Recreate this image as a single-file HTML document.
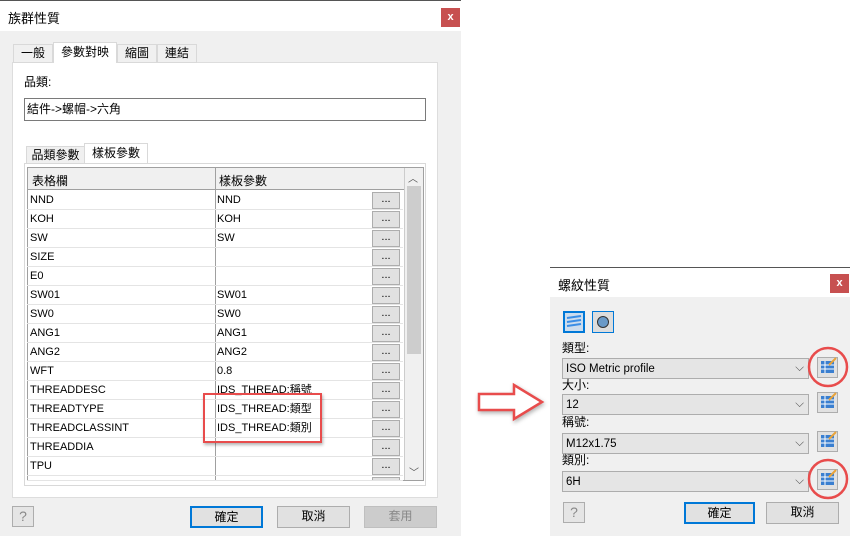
<!DOCTYPE html><html><head><meta charset="utf-8"><style>
*{box-sizing:border-box;margin:0;padding:0}
body{width:850px;height:536px;background:#fff;position:relative;overflow:hidden;font-family:"Liberation Sans","Noto Sans CJK TC",sans-serif;font-size:12px;color:#000}
.a{position:absolute}
.btn{position:absolute;background:#e1e1e1;border:1px solid #adadad;text-align:center;font-size:12px;line-height:19px}
.row{position:absolute;left:27px;width:376px;height:19px;border-bottom:1px solid #e4e4e4;font-size:11px;line-height:19px}
.row span{position:absolute;left:3px}
.row i{font-style:normal;position:absolute;left:190px}
.row b{position:absolute;left:345px;top:1px;width:28px;height:17px;background:#e1e1e1;border:1px solid #adadad;font-weight:normal;line-height:12px;text-align:center}
.combo{position:absolute;left:562px;width:247px;height:21px;background:#e5e5e5;border:1px solid #adadad;font-size:11.5px;line-height:20px;padding-left:3px}
.combo:after{content:"⌵";position:absolute;right:4px;top:-1px;color:#555}
.ib{position:absolute;left:817px;width:21px;height:21px;background:#e1e1e1;border:1px solid #adadad}
</style></head><body>
<div class="a" style="left:0;top:0;width:461px;height:536px;background:#f0f0f0"></div>
<div class="a" style="left:0;top:0;width:461px;height:1px;background:#555"></div>
<div class="a" style="left:0;top:1px;width:461px;height:30px;background:#fff"></div>
<div class="a" style="left:8px;top:8px;font-size:13px">族群性質</div>
<div class="a" style="left:441px;top:8px;width:19px;height:19px;background:#c75050;color:#fff;text-align:center;line-height:18px;font-size:11px;font-weight:bold">x</div>
<div class="a" style="left:12px;top:62px;width:426px;height:436px;background:#fff;border:1px solid #ddd"></div>
<div class="a" style="left:13px;top:44px;width:40px;height:19px;border:1px solid #d9d9d9;background:#f0f0f0;text-align:center;line-height:17px">一般</div>
<div class="a" style="left:53px;top:42px;width:64px;height:21px;border:1px solid #d9d9d9;border-bottom:none;background:#fff;text-align:center;line-height:18px">參數對映</div>
<div class="a" style="left:117px;top:44px;width:40px;height:19px;border:1px solid #d9d9d9;background:#f0f0f0;text-align:center;line-height:17px">縮圖</div>
<div class="a" style="left:157px;top:44px;width:40px;height:19px;border:1px solid #d9d9d9;background:#f0f0f0;text-align:center;line-height:17px">連結</div>
<div class="a" style="left:24px;top:73px">品類:</div>
<div class="a" style="left:24px;top:98px;width:402px;height:23px;border:1px solid #7a7a7a;line-height:20px;padding-left:2px">結件->螺帽->六角</div>
<div class="a" style="left:26px;top:146px;width:59px;height:18px;border:1px solid #d9d9d9;background:#f0f0f0;text-align:center;line-height:16px">品類參數</div>
<div class="a" style="left:84px;top:143px;width:64px;height:21px;border:1px solid #d9d9d9;border-bottom:none;background:#fff;text-align:center;line-height:18px">樣板參數</div>
<div class="a" style="left:24px;top:163px;width:402px;height:323px;border:1px solid #d9d9d9;background:#fff"></div>
<div class="a" style="left:27px;top:167px;width:397px;height:314px;border:1px solid #a0a0a0;background:#fff;overflow:hidden">
<div class="a" style="left:0;top:0;width:376px;height:22px;background:#f0f0f0;border-bottom:1px solid #a0a0a0"></div>
<div class="a" style="left:187px;top:0;width:1px;height:314px;background:#a0a0a0"></div>
<div class="a" style="left:4px;top:4px">表格欄</div><div class="a" style="left:191px;top:4px">樣板參數</div>
<div class="a" style="left:376px;top:0;width:19px;height:314px;background:#f0f0f0;border-left:1px solid #ccc"></div>
<div class="a" style="left:380px;top:2px;font-size:10px;color:#555">︿</div>
<div class="a" style="left:379px;top:18px;width:14px;height:168px;background:#cdcdcd"></div>
<div class="a" style="left:381px;top:296px;font-size:10px;color:#555">﹀</div>
</div>
<div class="a" style="left:0;top:1px">
<div class="row" style="top:190px"><span>NND</span><i>NND</i><b>...</b></div>
<div class="row" style="top:209px"><span>KOH</span><i>KOH</i><b>...</b></div>
<div class="row" style="top:228px"><span>SW</span><i>SW</i><b>...</b></div>
<div class="row" style="top:247px"><span>SIZE</span><b>...</b></div>
<div class="row" style="top:266px"><span>E0</span><b>...</b></div>
<div class="row" style="top:285px"><span>SW01</span><i>SW01</i><b>...</b></div>
<div class="row" style="top:304px"><span>SW0</span><i>SW0</i><b>...</b></div>
<div class="row" style="top:323px"><span>ANG1</span><i>ANG1</i><b>...</b></div>
<div class="row" style="top:342px"><span>ANG2</span><i>ANG2</i><b>...</b></div>
<div class="row" style="top:361px"><span>WFT</span><i>0.8</i><b>...</b></div>
<div class="row" style="top:380px"><span>THREADDESC</span><i>IDS_THREAD:稱號</i><b>...</b></div>
<div class="row" style="top:399px"><span>THREADTYPE</span><i>IDS_THREAD:類型</i><b>...</b></div>
<div class="row" style="top:418px"><span>THREADCLASSINT</span><i>IDS_THREAD:類別</i><b>...</b></div>
<div class="row" style="top:437px"><span>THREADDIA</span><b>...</b></div>
<div class="row" style="top:456px"><span>TPU</span><b>...</b></div>
<div class="row" style="top:475px;height:5px;overflow:hidden"><b>...</b></div>
</div>
<div class="a" style="left:203px;top:393px;width:119px;height:50px;border:2px solid #e84c4c;box-shadow:1px 2px 3px rgba(0,0,0,.3)"></div>
<div class="a" style="left:12px;top:506px;width:22px;height:21px;border:1px solid #adadad;background:#e5e5e5;text-align:center;color:#888;font-size:14px;line-height:19px">?</div>
<div class="btn" style="left:190px;top:506px;width:73px;height:22px;border:2px solid #0078d7">確定</div>
<div class="btn" style="left:277px;top:506px;width:73px;height:22px">取消</div>
<div class="btn" style="left:364px;top:506px;width:73px;height:22px;background:#ccc;border-color:#bfbfbf;color:#888">套用</div>
<svg class="a" style="left:474px;top:380px" width="76" height="46"><path d="M5 14 H40 V5 L68 22 L40 39 V30 H5 Z" fill="#fff" stroke="#e84c4c" stroke-width="2.5" style="filter:drop-shadow(1px 2px 2px rgba(0,0,0,.3))"/></svg>
<div class="a" style="left:550px;top:267px;width:300px;height:269px;background:#f0f0f0"></div>
<div class="a" style="left:550px;top:267px;width:300px;height:1px;background:#555"></div>
<div class="a" style="left:550px;top:268px;width:300px;height:29px;background:#fff"></div>
<div class="a" style="left:558px;top:275px;font-size:13px">螺紋性質</div>
<div class="a" style="left:830px;top:274px;width:19px;height:19px;background:#c75050;color:#fff;text-align:center;line-height:18px;font-size:11px;font-weight:bold">x</div>
<div class="a" style="left:563px;top:311px;width:22px;height:22px;border:2px solid #0078d7;background:#cde"><svg width="18" height="18"><path d="M2 5 L16 3 M2 9 L16 7 M2 13 L16 11" stroke="#3a8ee6" stroke-width="2"/></svg></div>
<div class="a" style="left:592px;top:311px;width:22px;height:22px;border:1px solid #0078d7;background:#ddd"><div style="margin:4px;width:12px;height:12px;border-radius:50%;background:#6a9ac8;border:1px solid #333"></div></div>
<div class="a" style="left:562px;top:339px">類型:</div>
<div class="combo" style="top:358px">ISO Metric profile</div>
<div class="a" style="left:562px;top:376px">大小:</div>
<div class="combo" style="top:394px">12</div>
<div class="a" style="left:562px;top:413px">稱號:</div>
<div class="combo" style="top:433px">M12x1.75</div>
<div class="a" style="left:562px;top:451px">類別:</div>
<div class="combo" style="top:471px">6H</div>
<div class="ib" style="top:357px"></div><div class="ib" style="top:392px"></div><div class="ib" style="top:431px"></div><div class="ib" style="top:469px"></div>
<svg class="a" style="left:0;top:0" width="850" height="536"><g fill="#3a7fd0"><rect x="821" y="361" width="13" height="12"/><rect x="821" y="396" width="13" height="12"/><rect x="821" y="435" width="13" height="12"/><rect x="821" y="473" width="13" height="12"/></g>
<g stroke="#fff" stroke-width="1"><path d="M821 365H834M821 369H834M825 361V373M821 400H834M821 404H834M825 396V408M821 439H834M821 443H834M825 435V447M821 477H834M821 481H834M825 473V485"/></g>
<g stroke="#e8a33a" stroke-width="2"><path d="M829 365L836 358M829 400L836 393M829 439L836 432M829 477L836 470"/></g>
<circle cx="828" cy="367" r="19" fill="none" stroke="#e84c4c" stroke-width="2.5"/><circle cx="828" cy="479" r="19" fill="none" stroke="#e84c4c" stroke-width="2.5"/></svg>
<div class="a" style="left:563px;top:502px;width:22px;height:21px;border:1px solid #adadad;background:#e5e5e5;text-align:center;color:#888;font-size:14px;line-height:19px">?</div>
<div class="btn" style="left:684px;top:502px;width:71px;height:22px;border:2px solid #0078d7">確定</div>
<div class="btn" style="left:766px;top:502px;width:73px;height:22px">取消</div>
</body></html>
